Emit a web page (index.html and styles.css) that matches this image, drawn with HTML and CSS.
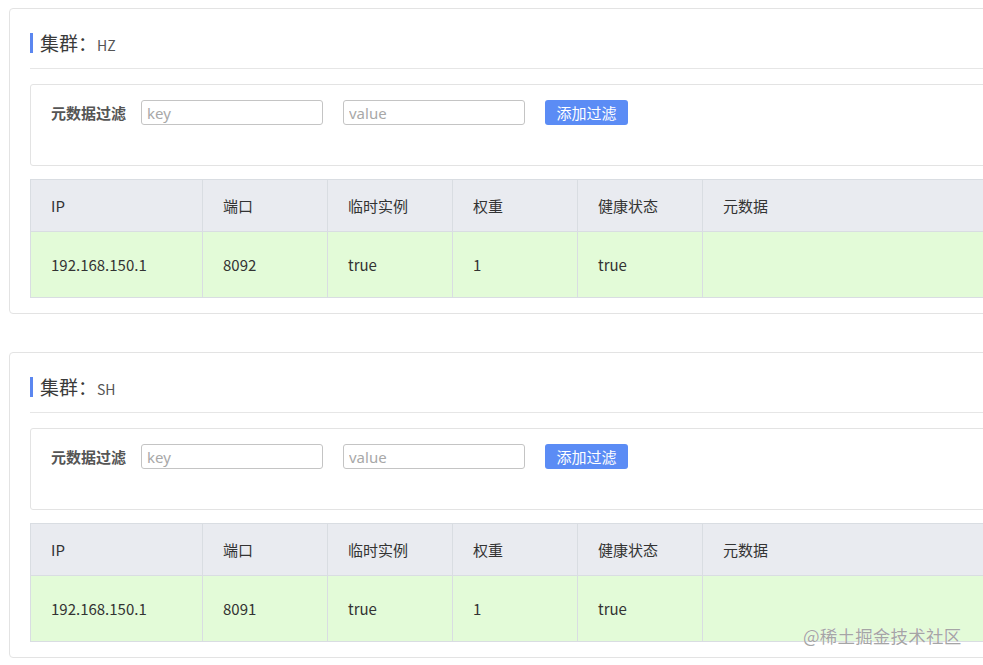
FILE: index.html
```html
<!DOCTYPE html>
<html lang="zh-CN">
<head>
<meta charset="utf-8">
<title>集群</title>
<link rel="stylesheet" href="styles.css">
</head>
<body>
<div class="page">
  <section class="card">
    <div class="card-title"><span class="bar"></span><span class="t-main">集群：</span><span class="t-name">HZ</span></div>
    <div class="filter">
      <span class="filter-label">元数据过滤</span>
      <input class="inp" type="text" placeholder="key">
      <input class="inp" type="text" placeholder="value">
      <button class="btn">添加过滤</button>
    </div>
    <table class="grid">
      <colgroup><col class="c1"><col class="cn"><col class="cn"><col class="cn"><col class="cn"><col></colgroup>
      <thead><tr><th>IP</th><th>端口</th><th>临时实例</th><th>权重</th><th>健康状态</th><th>元数据</th></tr></thead>
      <tbody><tr><td>192.168.150.1</td><td>8092</td><td>true</td><td>1</td><td>true</td><td></td></tr></tbody>
    </table>
  </section>
  <section class="card">
    <div class="card-title"><span class="bar"></span><span class="t-main">集群：</span><span class="t-name">SH</span></div>
    <div class="filter">
      <span class="filter-label">元数据过滤</span>
      <input class="inp" type="text" placeholder="key">
      <input class="inp" type="text" placeholder="value">
      <button class="btn">添加过滤</button>
    </div>
    <table class="grid">
      <colgroup><col class="c1"><col class="cn"><col class="cn"><col class="cn"><col class="cn"><col></colgroup>
      <thead><tr><th>IP</th><th>端口</th><th>临时实例</th><th>权重</th><th>健康状态</th><th>元数据</th></tr></thead>
      <tbody><tr><td>192.168.150.1</td><td>8091</td><td>true</td><td>1</td><td>true</td><td></td></tr></tbody>
    </table>
  </section>
</div>
<div class="watermark">@稀土掘金技术社区</div>
</body>
</html>
```
FILE: styles.css
```css
html, body {
  margin: 0;
  padding: 0;
  overflow: hidden;
  background: #fff;
}
body {
  font-family: "Noto Sans CJK SC", "Noto Sans", sans-serif;
  color: #333;
  font-size: 15px;
}
.page {
  width: 1300px;
  padding: 8px 0 0 9px;
}
.card {
  border: 1px solid #e3e3e3;
  border-radius: 4px;
  padding: 24px 0 15px 20px;
  margin-bottom: 38px;
}
.card-title {
  display: flex;
  align-items: center;
  height: 20px;
  padding-bottom: 15px;
  border-bottom: 1px solid #e6e6e6;
}
.bar {
  width: 3px;
  height: 20px;
  background: #5b87f0;
  margin-right: 7px;
}
.t-main {
  font-size: 19px;
  color: #3a3a3a;
  line-height: 20px;
}
.t-name {
  font-size: 14px;
  color: #555;
  line-height: 20px;
  padding-top: 3px;
}
.filter {
  margin-top: 15px;
  border: 1px solid #e3e3e3;
  border-radius: 3px;
  padding: 15px 20px 40px 20px;
  display: flex;
  align-items: center;
  height: 25px;
}
.filter-label {
  font-weight: bold;
  font-size: 15px;
  color: #555;
  width: 75px;
  margin-right: 15px;
  white-space: nowrap;
}
.inp {
  box-sizing: border-box;
  width: 182px;
  height: 25px;
  border: 1px solid #c4c4c4;
  border-radius: 3px;
  padding: 0 5px;
  font-family: "Noto Sans", sans-serif;
  font-size: 15px;
  color: #333;
  margin: 0 20px 0 0;
  outline: none;
}
.inp::placeholder {
  color: #a8a8a8;
}
.btn {
  box-sizing: border-box;
  width: 83px;
  height: 25px;
  border: none;
  border-radius: 3px;
  background: #5b8cf5;
  color: #fff;
  font-family: "Noto Sans CJK SC", sans-serif;
  font-size: 15px;
  padding: 0;
  margin: 0;
}
.grid {
  margin-top: 13px;
  border-collapse: collapse;
  table-layout: fixed;
  width: 1260px;
  border: 1px solid #d9dde2;
}
.c1 { width: 172px; }
.cn { width: 125px; }
.grid th, .grid td {
  text-align: left;
  font-weight: normal;
  padding: 0 0 0 20px;
  border-left: 1px solid #d9dde2;
  font-size: 15px;
  color: #333;
}
.grid th {
  background: #e9ebf0;
  height: 51px;
  border-bottom: 1px solid #d9dde2;
}
.grid td {
  background: #e3fbd8;
  height: 65px;
}
.watermark {
  position: absolute;
  left: 803px;
  top: 623px;
  font-size: 17.5px;
  color: #a5a5a5;
  letter-spacing: 0.2px;
  text-shadow: 0 0 1px #fff;
}
```
